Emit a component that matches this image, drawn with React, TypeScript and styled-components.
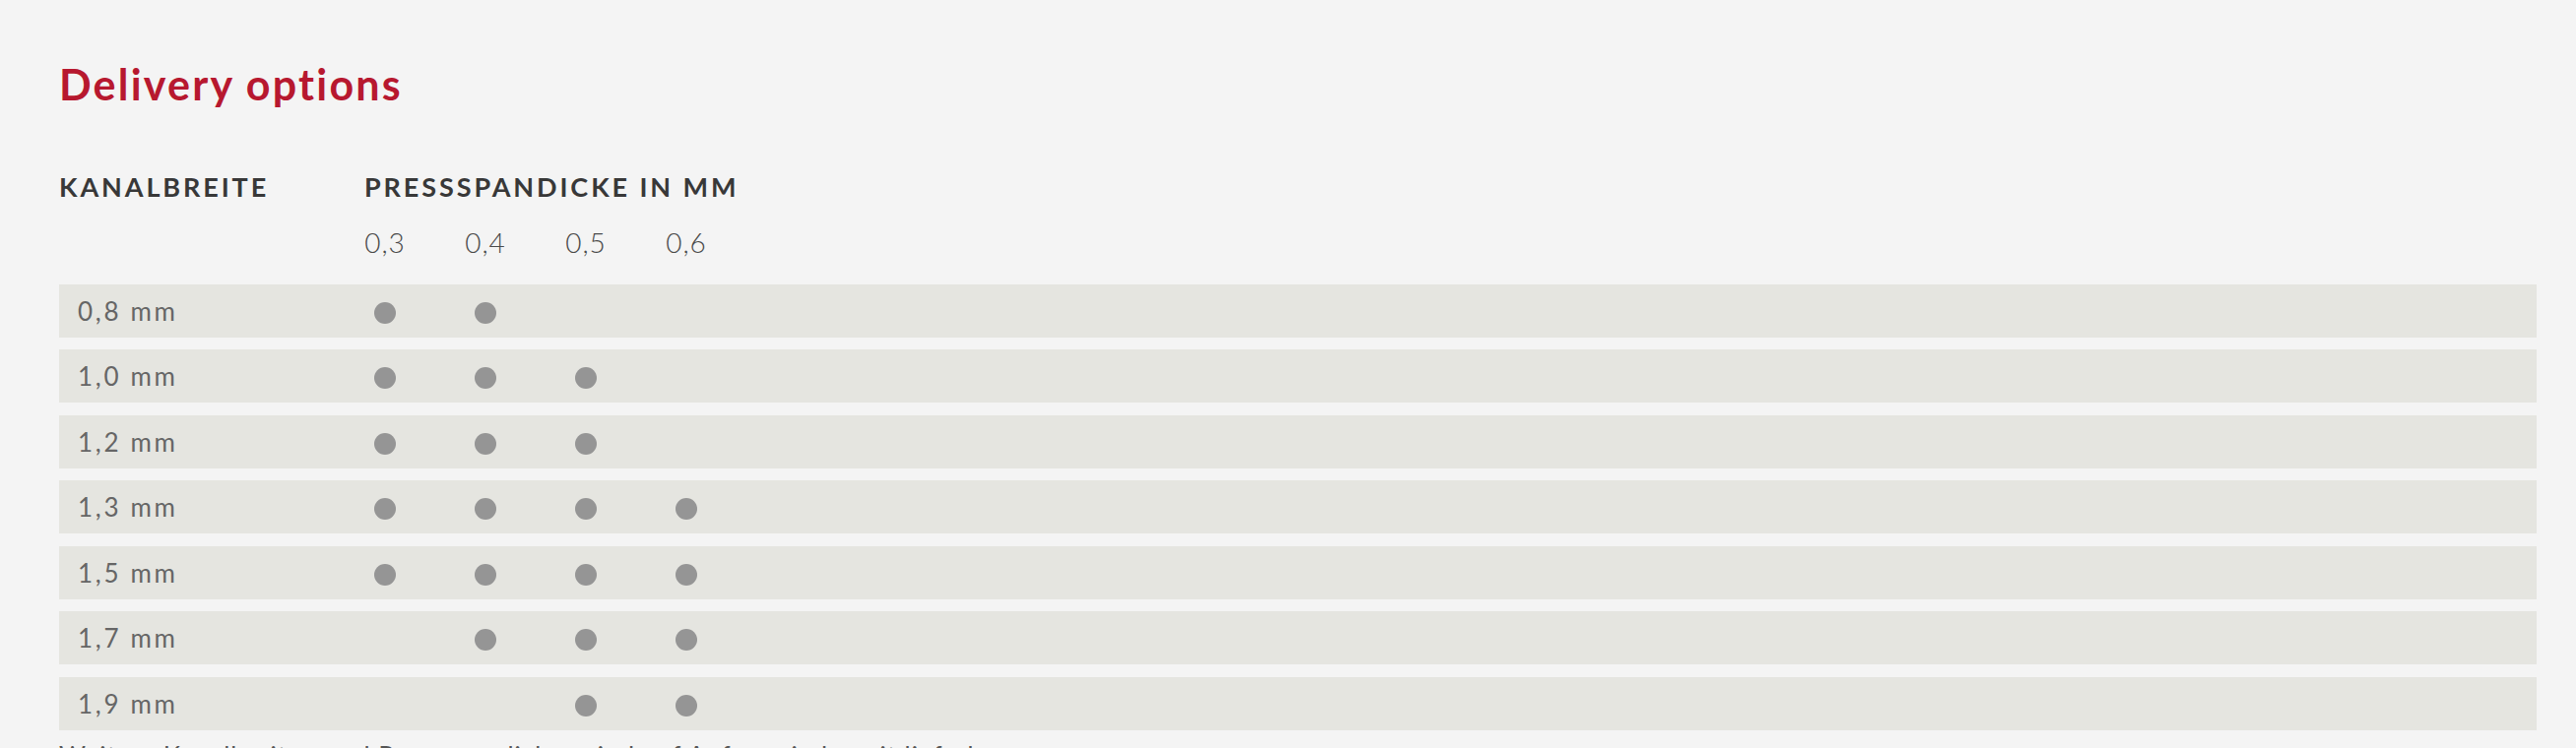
import styled, { createGlobalStyle } from 'styled-components'

const GlobalStyle = createGlobalStyle`
    html, body {
        margin: 0;
        padding: 0;
        background: #f4f4f4;
        font-family: Lato, 'Open Sans', sans-serif;
    }
`

const Page = styled.main`
    padding: 60px 40px 0 60px;
    height: 760px;
    box-sizing: border-box;
    overflow: hidden;
`

const Title = styled.h2`
    margin: 0;
    font-size: 43px;
    font-weight: 700;
    letter-spacing: 2.2px;
    color: #b7182f;
`

const Grid = styled.div`
    display: grid;
    grid-template-columns: 280px repeat(4, 102px) 1fr;
    align-items: center;
`

const HeadRow = styled(Grid)`
    margin-top: 62px;
    font-size: 27px;
    font-weight: 700;
    letter-spacing: 2.9px;
    text-transform: uppercase;
    color: #383838;
`

const GroupHead = styled.div`
    grid-column: 2 / span 5;
    padding-left: 30px;
`

const SubRow = styled(Grid)`
    margin-top: 22.5px;
    font-size: 28px;
    font-weight: 300;
    letter-spacing: 1px;
    color: #4a4a4a;
`

const SubCell = styled.div<{ $col: number }>`
    grid-column: ${(props) => props.$col};
    text-align: center;
`

const Rows = styled.div`
    display: flex;
    flex-direction: column;
    gap: 12.5px;
    margin-top: 26px;
`

const DataRow = styled(Grid)`
    height: 54px;
    background: #e5e5e0;
`

const Label = styled.div`
    padding-left: 19px;
    font-size: 26px;
    letter-spacing: 2.7px;
    color: #666666;
`

const DotCell = styled.div`
    display: flex;
    justify-content: center;
    align-items: center;
`

const Dot = styled.span`
    width: 22px;
    height: 22px;
    margin-top: 4px;
    border-radius: 50%;
    background: #959595;
`

const Note = styled.p`
    margin: 10px 0 0;
    font-size: 26px;
    letter-spacing: 1px;
    color: #555555;
`

const thicknesses = ['0,3', '0,4', '0,5', '0,6']

const channels = [
    { label: '0,8 mm', avail: [1, 1, 0, 0] },
    { label: '1,0 mm', avail: [1, 1, 1, 0] },
    { label: '1,2 mm', avail: [1, 1, 1, 0] },
    { label: '1,3 mm', avail: [1, 1, 1, 1] },
    { label: '1,5 mm', avail: [1, 1, 1, 1] },
    { label: '1,7 mm', avail: [0, 1, 1, 1] },
    { label: '1,9 mm', avail: [0, 0, 1, 1] },
]

export default function App(): JSX.Element {
    return (
        <>
            <GlobalStyle />
            <Page>
                <Title>Delivery options</Title>
                <HeadRow>
                    <div>Kanalbreite</div>
                    <GroupHead>Pressspandicke in mm</GroupHead>
                </HeadRow>
                <SubRow>
                    {thicknesses.map((t, i) => (
                        <SubCell key={t} $col={i + 2}>
                            {t}
                        </SubCell>
                    ))}
                </SubRow>
                <Rows>
                    {channels.map((row) => (
                        <DataRow key={row.label}>
                            <Label>{row.label}</Label>
                            {row.avail.map((a, i) => (
                                <DotCell key={i}>{a ? <Dot /> : null}</DotCell>
                            ))}
                        </DataRow>
                    ))}
                </Rows>
                <Note>
                    Weitere Kanalbreiten und Pressspandicken sind auf Anfrage
                    jederzeit lieferbar.
                </Note>
            </Page>
        </>
    )
}
